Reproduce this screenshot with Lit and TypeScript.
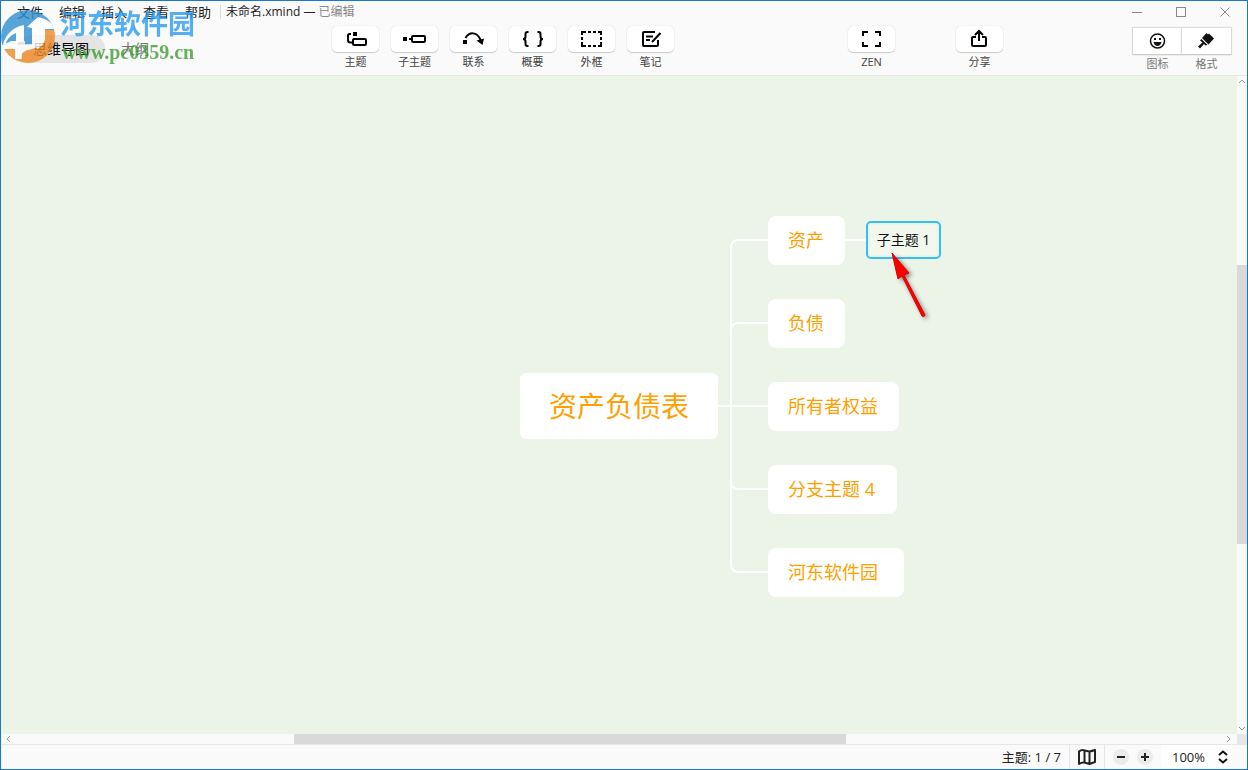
import { LitElement, html, css, svg } from "lit";
import { customElement, property, state } from "lit/decorators.js";

const glyphs: Record<string, unknown> = {
  topic: svg`<path d="M6 6H4.500Q3 6 3 7.500V12Q3 14.500 5.500 14.500H7" fill="none" stroke="currentColor" stroke-width="2"/><rect x="8" y="4" width="4" height="4"/><rect x="8" y="11" width="13" height="6" rx="1" fill="none" stroke="currentColor" stroke-width="2"/>`,
  subtopic: svg`<rect x="-1" y="9" width="4" height="4"/><path d="M5 11H8" stroke="currentColor" stroke-width="2"/><rect x="8" y="8" width="13" height="6" rx="1" fill="none" stroke="currentColor" stroke-width="2"/>`,
  relation: svg`<rect x="0" y="12" width="4" height="4"/><path d="M2.500 10C6 4 14 3 17.500 12" fill="none" stroke="currentColor" stroke-width="2"/><path d="M13.500 12.500L21 10.500L19.500 17Z"/>`,
  summary: svg`<path d="M6.500 4H5.500Q3.500 4 3.500 6V8.500Q3.500 11 1 11Q3.500 11 3.500 13.500V16Q3.500 18 5.500 18H6.500M15.500 4H16.500Q18.500 4 18.500 6V8.500Q18.500 11 21 11Q18.500 11 18.500 13.500V16Q18.500 18 16.500 18H15.500" fill="none" stroke="currentColor" stroke-width="2"/>`,
  boundary: svg`<path d="M1 7V4H5M7 4H10M12 4H15M17 4H20V7M20 9V12M20 14V18H17M15 18H12M10 18H7M5 18H1V14M1 12V9" fill="none" stroke="currentColor" stroke-width="2"/>`,
  note: svg`<path d="M15 4H4Q3 4 3 5V17Q3 18 4 18H17Q18 18 18 17V12M6 8.500H13M6 12H10M20.500 5L12 14" fill="none" stroke="currentColor" stroke-width="2"/>`,
  zen: svg`<path d="M7 4H2V8M14 4H19V8M19 14V18H14M7 18H2V14" fill="none" stroke="currentColor" stroke-width="2"/>`,
  share: svg`<path d="M7 9H4Q3 9 3 10V17Q3 18 4 18H16Q17 18 17 17V10Q17 9 16 9H13M10 13V4M6 7L10 3L14 7" fill="none" stroke="currentColor" stroke-width="2"/>`,
  smile: svg`<circle cx="10.500" cy="11" r="7" fill="none" stroke="currentColor" stroke-width="1.500"/><rect x="7" y="8" width="2" height="2"/><rect x="12" y="8" width="2" height="2"/><path d="M6.500 12H14.500Q13.500 16 10.500 16Q7.500 16 6.500 12Z"/>`,
  brush: svg`<path d="M10.500 3L12 4.500L13 3.500L18 8.500L12.500 14.500L6 8ZM5.500 9L11.500 15L9.500 15.500L8 14L4 18.500L2 16.500L6.500 12.500L4 10.500Z"/>`,
  map: svg`<path d="M3 5.500Q6 3 8.500 4.500L13.500 5.500Q16 5 19 4V16Q16 17 13.500 18L8.500 16.500Q6 16 3 18ZM8.500 4.500V16.500M13.500 5.500V18" fill="none" stroke="currentColor" stroke-width="2" stroke-linejoin="round"/>`,
};

const icon = (name: string) =>
  html`<svg class="icon" viewBox="0 0 22 22" width="22" height="22" fill="currentColor" overflow="visible" aria-hidden="true">${glyphs[name]}</svg>`;

@customElement("tool-button")
class ToolButton extends LitElement {
  @property() glyph = "";
  @property() label = "";

  static styles = css`
    :host { display: block; }
    .tool {
      display: flex; flex-direction: column; align-items: center; gap: 2px;
      width: 47px; padding: 0; border: 0; background: none; color: #444;
      font: inherit; font-size: 11px; line-height: 16px;
    }
    .face {
      display: flex; align-items: center; justify-content: center;
      width: 100%; height: 26px; background: #fff; color: #000;
      border-radius: 5px; box-shadow: 0 1px 1px #ccc, 0 0 1px #ccc;
    }
  `;

  render() {
    return html`<button class="tool" type="button">
      <span class="face">${icon(this.glyph)}</span><span>${this.label}</span>
    </button>`;
  }
}

interface Topic { text: string; x: number; y: number; w: number; h: number; kind: string; }

/* Positions are measured from the middle of the canvas. */
const topics: Topic[] = [
  { text: "资产负债表", x: -99, y: -32, w: 198, h: 66, kind: "root" },
  { text: "资产", x: 149, y: -189, w: 77, h: 49, kind: "branch" },
  { text: "负债", x: 149, y: -106, w: 77, h: 49, kind: "branch" },
  { text: "所有者权益", x: 149, y: -23, w: 131, h: 49, kind: "branch" },
  { text: "分支主题 4", x: 149, y: 60, w: 129, h: 49, kind: "branch" },
  { text: "河东软件园", x: 149, y: 143, w: 136, h: 49, kind: "branch" },
  { text: "子主题 1", x: 247, y: -184, w: 75, h: 38, kind: "child" },
];

@customElement("mind-map")
class MindMap extends LitElement {
  static styles = css`
    :host { display: block; position: relative; overflow: hidden; background: #ecf4e8; }
    .origin { position: absolute; left: 50%; top: 50%; width: 0; height: 0; }
    .lines { position: absolute; overflow: visible; left: 0; top: 0; }
    .topic {
      position: absolute; box-sizing: border-box; display: flex; align-items: center;
      white-space: nowrap; background: #fff; color: #ff9f00;
    }
    .root { justify-content: center; border-radius: 6px; font-size: 28px; line-height: 40px; }
    .branch { padding: 0 0 2px 20px; border-radius: 8px; font-size: 18px; line-height: 24px; }
    .child {
      justify-content: center; border: 2px solid #33bdfb; border-radius: 5px;
      background: #f3f8ef; color: #111; font-size: 14px; line-height: 20px;
      box-shadow: inset 0 0 0 2px #ecf4e8;
    }
  `;

  render() {
    return html`<div class="origin">
      <svg class="lines" width="1" height="1" fill="none" stroke="#fff" stroke-width="2" aria-hidden="true">
        <path d="M99 1H149M149 -165H120Q112 -165 112 -157V159Q112 167 120 167H149M149 -82H120Q112 -82 112 -74M112 76Q112 84 120 84H149M226 -165H250" />
      </svg>
      ${topics.map((t) => html`<div class="topic ${t.kind}"
        style="left:${t.x}px;top:${t.y}px;width:${t.w}px;height:${t.h}px">${t.text}</div>`)}
      <svg class="lines" width="1" height="1" aria-hidden="true">
        <defs><filter id="soft" x="-50%" y="-50%" width="200%" height="200%"><feGaussianBlur stdDeviation="2" /></filter></defs>
        <path d="M273 -152L290 -132L284 -129L306 -90L303 -88L282 -127L279 -126Z" fill="#333" opacity=".6" filter="url(#soft)" transform="translate(3 2)" />
        <path d="M273 -152L290 -132L285 -130L306 -90Q305 -87 303 -89L283 -129L279 -126Z" fill="#f00" stroke="#d00" stroke-width="1" />
      </svg>
    </div>`;
  }
}

const tools = [
  ["topic", "主题"], ["subtopic", "子主题"], ["relation", "联系"],
  ["summary", "概要"], ["boundary", "外框"], ["note", "笔记"],
];

@customElement("app-root")
class AppRoot extends LitElement {
  @state() private zoom = 100;

  static styles = css`
    :host {
      display: grid; grid-template-rows: auto 1fr auto; box-sizing: border-box;
      height: 100vh; border: 1px solid #1979ca; background: #fafafa; color: #222;
      font-family: "Open Sans", "Noto Sans CJK SC", sans-serif; font-size: 13px;
      position: relative; overflow: hidden;
    }
    button { font: inherit; color: inherit; border: 0; padding: 0; background: none; }
    .header { border-bottom: 1px solid #e6e6e6; }
    .titlebar { display: flex; align-items: center; height: 22px; padding-left: 8px; }
    .menu { display: flex; padding-right: 1px; }
    .menu button { padding: 0 8px; line-height: 20px; }
    .document {
      margin: 0; padding-left: 5px; border-left: 1px solid #ddd;
      font-size: 12px; font-weight: 400; line-height: 14px; white-space: nowrap;
    }
    .edited { color: #888; }
    .window { display: flex; margin-left: auto; }
    .window button { display: flex; align-items: center; justify-content: center; width: 44px; height: 22px; color: #888; }
    .toolbar { display: flex; align-items: flex-start; height: 49px; padding: 3px 16px 0 16px; }
    .tabs { display: flex; flex: none; width: 315px; padding-top: 9px; }
    .tabs button { height: 28px; padding: 0 16px; border-radius: 14px; font-size: 14px; line-height: 28px; color: #777; }
    .tabs .current { background: #e4e4e4; color: #000; }
    .tools { display: flex; gap: 12px; }
    .actions { display: flex; gap: 61px; margin-left: auto; }
    .panels { display: grid; grid-template-columns: 1fr 1fr; width: 98px; margin-left: 130px; padding-top: 2px; }
    .panels button {
      display: flex; flex-direction: column; align-items: center; gap: 2px;
      font-size: 11px; line-height: 16px; color: #777;
    }
    .panels .face {
      display: flex; align-items: center; justify-content: center; width: 100%; height: 26px;
      background: #fff; color: #111; box-shadow: 0 1px 1px #ccc, 0 0 1px 1px #ddd;
    }
    .workspace { display: grid; grid-template-columns: 1fr 10px; grid-template-rows: 1fr 10px; min-height: 0; }
    .scroll { display: flex; align-items: center; justify-content: space-between; background: #fafafa; color: #999; }
    .vertical { flex-direction: column; }
    .scroll button { display: flex; width: 10px; height: 10px; align-items: center; justify-content: center; }
    .horizontal button { width: 16px; }
    .rail { flex: 1; display: grid; align-self: stretch; }
    .vertical .rail { grid-template-rows: 179fr 279fr 180fr; }
    .horizontal .rail { grid-template-columns: 277fr 552fr 375fr; }
    .thumb { background: #d9d9d9; }
    .vertical .thumb { grid-row: 2; }
    .horizontal .thumb { grid-column: 2; }
    .corner { background: #e6e6e6; }
    .status {
      display: flex; align-items: stretch; justify-content: flex-end; height: 24px;
      border-top: 1px solid #e6e6e6; padding-right: 15px; line-height: 24px;
    }
    .count { padding-right: 8px; }
    .overview { display: flex; align-items: center; justify-content: center; width: 34px; border: solid #e6e6e6; border-width: 0 1px; }
    .overview button { display: flex; }
    .steps { display: flex; align-items: center; gap: 8px; padding: 0 8px; }
    .steps button { display: flex; align-items: center; justify-content: center; width: 16px; height: 16px; border-radius: 50%; background: #ebebeb; }
    .zoom { display: grid; grid-template-columns: 1fr 12px; align-items: center; width: 60px; padding: 0 3px 0 8px; background: #fff; }
    .zoom select {
      grid-area: 1 / 1 / 2 / 3; appearance: none; border: 0; background: none; padding: 0 0 0 3px;
      font: inherit; color: inherit; height: 24px; width: 100%;
    }
    .zoom svg { grid-area: 1 / 2; pointer-events: none; }
    .watermark { position: absolute; left: 0; top: 0; pointer-events: none; opacity: .8; }
    .mark { display: block; }
    .site { position: absolute; left: 59px; top: 4px; color: #2b9cf3; font-size: 27px; font-weight: 700; line-height: 38px; white-space: nowrap; }
    .address { position: absolute; left: 61px; top: 39px; color: #3f9f32; font: bold 20px/24px "Liberation Serif", serif; }
  `;

  render() {
    return html`
      <header class="header">
        <div class="titlebar">
          <nav class="menu">${["文件", "编辑", "插入", "查看", "帮助"].map((m) => html`<button type="button">${m}</button>`)}</nav>
          <h1 class="document">未命名.xmind — <span class="edited">已编辑</span></h1>
          <div class="window">
            <button type="button" aria-label="最小化"><svg width="10" height="10"><path d="M0 5.500H10" stroke="currentColor" /></svg></button>
            <button type="button" aria-label="最大化"><svg width="10" height="10"><rect x=".5" y=".5" width="9" height="9" fill="none" stroke="currentColor" /></svg></button>
            <button type="button" aria-label="关闭"><svg width="10" height="10"><path d="M.5 .5L9.500 9.500M9.500 .5L.5 9.500" stroke="currentColor" /></svg></button>
          </div>
        </div>
        <div class="toolbar">
          <div class="tabs"><button class="current" type="button">思维导图</button><button type="button">大纲</button></div>
          <div class="tools">${tools.map(([g, l]) => html`<tool-button glyph=${g} label=${l}></tool-button>`)}</div>
          <div class="actions">
            <tool-button glyph="zen" label="ZEN"></tool-button>
            <tool-button glyph="share" label="分享"></tool-button>
          </div>
          <div class="panels">
            <button type="button"><span class="face">${icon("smile")}</span><span>图标</span></button>
            <button type="button"><span class="face">${icon("brush")}</span><span>格式</span></button>
          </div>
        </div>
      </header>
      <main class="workspace">
        <mind-map></mind-map>
        <div class="scroll vertical">
          <button type="button" aria-label="向上"><svg width="8" height="8" fill="none" stroke="currentColor"><path d="M1 6L4 3L7 6" /></svg></button>
          <div class="rail"><div class="thumb"></div></div>
          <button type="button" aria-label="向下"><svg width="8" height="8" fill="none" stroke="currentColor"><path d="M1 2L4 5L7 2" /></svg></button>
        </div>
        <div class="scroll horizontal">
          <button type="button" aria-label="向左"><svg width="8" height="8" fill="none" stroke="currentColor"><path d="M5 1L2 4L5 7" /></svg></button>
          <div class="rail"><div class="thumb"></div></div>
          <button type="button" aria-label="向右"><svg width="8" height="8" fill="none" stroke="currentColor"><path d="M2 1L5 4L2 7" /></svg></button>
        </div>
        <div class="corner"></div>
      </main>
      <footer class="status">
        <span class="count">主题: 1 / 7</span>
        <div class="overview"><button type="button" aria-label="导航图">${icon("map")}</button></div>
        <div class="steps">
          <button type="button" aria-label="缩小" @click=${() => (this.zoom = Math.max(50, this.zoom - 50))}><svg width="8" height="8"><path d="M0 4H8" stroke="currentColor" stroke-width="2" /></svg></button>
          <button type="button" aria-label="放大" @click=${() => (this.zoom = Math.min(200, this.zoom + 50))}><svg width="8" height="8"><path d="M0 4H8M4 0V8" stroke="currentColor" stroke-width="2" /></svg></button>
        </div>
        <div class="zoom">
          <select aria-label="缩放">${[50, 100, 150, 200].map((z) => html`<option ?selected=${z === this.zoom}>${z}%</option>`)}</select>
          <svg width="12" height="14" fill="none" stroke="#111" stroke-width="2"><path d="M2 5L6 1.500L10 5M2 9L6 12.500L10 9" /></svg>
        </div>
      </footer>
      <div class="watermark">
        <svg class="mark" width="60" height="66" viewBox="0 0 60 66" aria-hidden="true">
          <defs><clipPath id="disc"><ellipse cx="27" cy="35.500" rx="27" ry="26.500" /></clipPath></defs>
          <g clip-path="url(#disc)">
            <path d="M-2 8H58V28L42 32V44L24 48V40H10L-2 46Z" fill="#2f8fcf" />
            <path d="M0 48H14V64H0ZM21 50L30 48Q40 44 42 36V29H56V64H14V58H21Z" fill="#f08a24" />
            <path d="M2 44C4 34 12 26 23 24V41H15V32C8 35 5 40 5 43Z" fill="#fff" />
            <path d="M26 26L37 16C46 18 52 22 55 28H44V38C43 43 40 46 36 48V24L31 28V48C22 50 20 52 20 58H15V48H1V44H15L31 43V27Z" fill="#fff" />
            <path d="M31 24H37V46L31 48Z" fill="#fff" />
          </g>
        </svg>
        <span class="site">河东软件园</span>
        <span class="address">www.pc0359.cn</span>
      </div>
    `;
  }
}
